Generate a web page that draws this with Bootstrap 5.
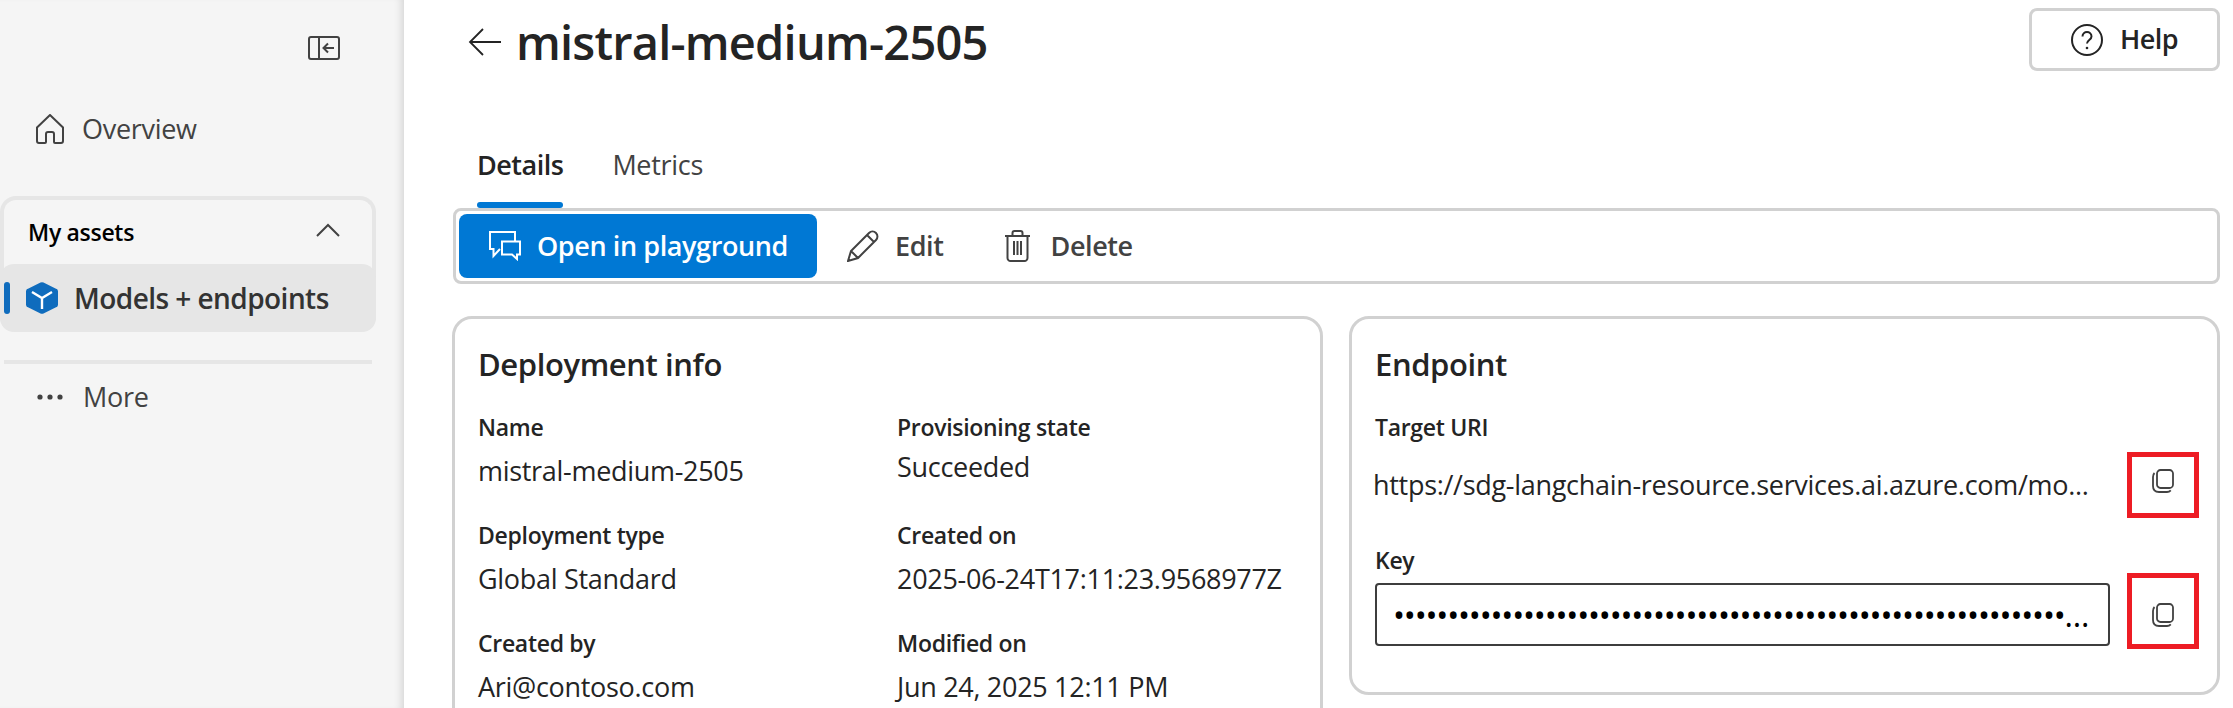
<!DOCTYPE html>
<html lang="en">
<head>
    <meta charset="UTF-8">
    <title>mistral-medium-2505</title>
    <link href="https://cdn.jsdelivr.net/npm/bootstrap@5.3.3/dist/css/bootstrap.min.css" rel="stylesheet">
    <style>
        html, body { height: 708px; overflow: hidden; }
        body { font-family: "Open Sans", "Noto Sans", sans-serif; color: #242424; font-size: 27px; background: #fff; letter-spacing: -.3px; }
        svg { display: block; flex: none; }

        .side-bar { width: 404px; height: 708px; background: #f5f5f5; box-shadow: inset -8px 0 8px -6px rgba(0,0,0,.14); flex: none; padding-top: 36px; }
        .collapse-wrap { padding-left: 308px; height: 24px; }
        .side-link { height: 40px; gap: 18px; color: #424242; }
        .overview-link { margin-top: 49px; padding-left: 36px; }
        .assets-group { margin-top: 47px; width: 376px; height: 136px; border: 4px solid #e6e6e6; border-bottom: 0; border-radius: 16px; }
        .assets-head { height: 64px; padding: 0 32px 0 24px; font-size: 23px; font-weight: 600; color: #000; }
        .assets-row { height: 68px; margin: 0 -4px; background: #e6e6e6; border-radius: 14px; gap: 16px; padding-left: 4px; font-size: 28px; font-weight: 600; color: #333; letter-spacing: -.55px; }
        .active-pill { width: 6px; height: 32px; background: #0f6cbd; border-radius: 3px; }
        .side-rule { height: 4px; background: #e6e6e6; width: 368px; margin: 28px 0 0 4px; }
        .more-link { margin-top: 13px; padding-left: 37px; gap: 20px; }

        .main-area { padding: 0 13px 0 48px; min-width: 0; }
        .head-row { height: 88px; }
        .page-title { font-size: 47px; font-weight: 600; margin: 0; letter-spacing: -.8px; line-height: 84px; }
        .back-link { margin: 0 15px 0 16px; }
        .help-btn { margin-top: 8px; width: 191px; height: 63px; border: 3px solid #d1d1d1; border-radius: 8px; gap: 17px; font-size: 27px; font-weight: 600; letter-spacing: -.5px; color: #242424; background: #fff; padding: 0; }

        .tab-row { margin-top: 46px; padding-left: 25px; gap: 49px; }
        .tab-item { height: 74px; padding-top: 13px; color: #424242; position: relative; line-height: 36px; }
        .tab-item.is-on { font-weight: 600; color: #242424; letter-spacing: -.5px; }
        .tab-item.is-on::after { content: ""; position: absolute; left: 0; right: 0; bottom: 0; height: 6px; background: #0078d4; border-radius: 3px; }

        .tool-bar { height: 76px; border: 3px solid #d1d1d1; border-radius: 8px; padding: 3px; margin-left: 1px; }
        .tool-primary { width: 358px; height: 64px; border-radius: 8px; background: #0078d4; border: 0; color: #fff; font-size: 27px; font-weight: 600; letter-spacing: -.4px; gap: 15px; padding: 0 0 0 29px; }
        .tool-btn { font-size: 27px; font-weight: 600; letter-spacing: -.4px; color: #424242; gap: 16px; margin-left: 30px; }
        .tool-btn.is-delete { gap: 20px; margin-left: 60px; }

        .card-row { margin-top: 32px; --bs-gutter-x: 26px; margin-left: -13px; margin-right: -13px; }
        .info-box { border: 3px solid #d1d1d1; border-radius: 20px; padding: 0 23px; }
        .info-title { font-size: 31px; font-weight: 600; line-height: 40px; margin: 0; padding-top: 25px; letter-spacing: -.4px; }
        .info-grid { grid-template-columns: 419px 1fr; margin-top: 28px; padding-bottom: 40px; }
        .info-cell { height: 108px; }
        .field-label { font-size: 23px; font-weight: 600; line-height: 30px; letter-spacing: -.3px; }
        .field-value { line-height: 36px; margin-top: 11px; }
        .field-value.is-tight { margin-top: 7px; }

        .endpoint-box { height: 379px; padding-right: 18px; }
        .uri-row { height: 66px; margin-top: 10px; }
        .uri-text { width: 718px; margin-left: -2px; white-space: nowrap; }
        .copy-box { width: 72px; flex: none; border: 5px solid #ed1c24; margin-left: 36px; padding-top: 12px; }
        .key-label { margin-top: 27px; }
        .key-row { height: 76px; margin-top: -2px; }
        .key-input { width: 735px; flex: none; height: 63px; margin-top: 10px; border: 2px solid #3d3d3d; border-radius: 4px; padding: 0 16px; font-size: 32px; color: #000; text-overflow: ellipsis; letter-spacing: -1.2px; box-shadow: none; }
        .key-input:focus { border-color: #3d3d3d; box-shadow: none; }
        .key-copy { margin-left: 17px; padding-top: 25px; }
    </style>
</head>
<body>
<div class="d-flex">
    <!-- left menu -->
    <aside class="side-bar">
        <div class="collapse-wrap">
            <svg width="32" height="24" viewBox="0 0 32 24" fill="none" stroke="#424242" stroke-width="2"><rect x="1" y="1" width="30" height="22" rx="2"/><path d="M11 1v22M26 12H16M20 7.500 15.500 12l4.500 4.500"/></svg>
        </div>
        <div class="side-link overview-link d-flex align-items-center">
            <svg width="28" height="30" viewBox="0 0 28 30" fill="none" stroke="#424242" stroke-width="2"><path d="M1 13.500 14 1l13 12.500V27a2 2 0 0 1-2 2h-6a1 1 0 0 1-1-1v-8a2 2 0 0 0-2-2h-4a2 2 0 0 0-2 2v8a1 1 0 0 1-1 1H3a2 2 0 0 1-2-2z"/></svg>
            <span>Overview</span>
        </div>
        <div class="assets-group">
            <div class="assets-head d-flex align-items-center justify-content-between">
                <span>My assets</span>
                <svg class="mb-1" width="24" height="14" viewBox="0 0 24 14" fill="none" stroke="#424242" stroke-width="2"><path d="M1 13 12 2l11 11"/></svg>
            </div>
            <div class="assets-row d-flex align-items-center">
                <span class="active-pill"></span>
                <svg width="32" height="32" viewBox="0 0 32 32"><path fill="#0f6cbd" d="M14.500.6a3 3 0 0 1 3 0l12 5.800A3 3 0 0 1 32 9v14a3 3 0 0 1-2.500 2.600l-12 5.800a3 3 0 0 1-3 0l-12-5.800A3 3 0 0 1 0 23V9a3 3 0 0 1 2.500-2.600z"/><path fill="none" stroke="#fff" stroke-width="2.400" d="M6 10l10 6 10-6M16 16v11"/></svg>
                <span>Models + endpoints</span>
            </div>
        </div>
        <div class="side-rule"></div>
        <div class="side-link more-link d-flex align-items-center">
            <svg width="26" height="6" viewBox="0 0 26 6" fill="#424242"><circle cx="3" cy="3" r="2.600"/><circle cx="13" cy="3" r="2.600"/><circle cx="23" cy="3" r="2.600"/></svg>
            <span>More</span>
        </div>
    </aside>

    <!-- page content -->
    <main class="main-area flex-grow-1">
        <div class="head-row d-flex justify-content-between align-items-start">
            <div class="d-flex align-items-center">
                <svg class="back-link" width="33" height="28" viewBox="0 0 33 28" fill="none" stroke="#242424" stroke-width="1.800"><path d="M33 14H2M15 1 2 14l13 13"/></svg>
                <h1 class="page-title">mistral-medium-2505</h1>
            </div>
            <button type="button" class="help-btn d-flex align-items-center justify-content-center">
                <svg width="32" height="32" viewBox="0 0 32 32" fill="none" stroke="#242424" stroke-width="2"><circle cx="16" cy="16" r="15"/><path d="M11.500 12.500c0-6 9-6 9 0 0 3.500-4.500 3.500-4.500 7"/><circle cx="16" cy="24" r="1.300" fill="#242424" stroke="none"/></svg>
                <span>Help</span>
            </button>
        </div>

        <div class="tab-row d-flex">
            <div class="tab-item is-on">Details</div>
            <div class="tab-item">Metrics</div>
        </div>

        <div class="tool-bar d-flex align-items-center">
            <button type="button" class="tool-primary d-flex align-items-center">
                <svg width="34" height="30" viewBox="0 0 34 30" fill="none" stroke="#fff" stroke-width="2"><path d="M27 10V1H2v17h3.500v7l6.500-7"/><path d="M14 10.500h18v13h-3v4.500l-5-4.500H14z"/></svg>
                <span>Open in playground</span>
            </button>
            <div class="tool-btn d-flex align-items-center">
                <svg width="32" height="32" viewBox="0 0 32 32" fill="none" stroke="#424242" stroke-width="2"><path d="M1 31l3-10L22 3a4.500 4.500 0 0 1 7 7L11 28zM4 21l7 7M20 5l7 7"/></svg>
                <span>Edit</span>
            </div>
            <div class="tool-btn is-delete d-flex align-items-center">
                <svg width="27" height="32" viewBox="0 0 27 32" fill="none" stroke="#424242" stroke-width="2"><path d="M1 6h25M8.500 6V3a2 2 0 0 1 2-2h6a2 2 0 0 1 2 2v3M3.500 6v22a3 3 0 0 0 3 3h14a3 3 0 0 0 3-3V6M10 11v14M13.500 11v14M17 11v14"/></svg>
                <span>Delete</span>
            </div>
        </div>

        <div class="row card-row align-items-start">
            <div class="col-6">
                <div class="info-box">
                    <h2 class="info-title">Deployment info</h2>
                    <div class="info-grid d-grid">
                        <div class="info-cell"><div class="field-label">Name</div><div class="field-value">mistral-medium-2505</div></div>
                        <div class="info-cell"><div class="field-label">Provisioning state</div><div class="field-value is-tight">Succeeded</div></div>
                        <div class="info-cell"><div class="field-label">Deployment type</div><div class="field-value">Global Standard</div></div>
                        <div class="info-cell"><div class="field-label">Created on</div><div class="field-value">2025-06-24T17:11:23.9568977Z</div></div>
                        <div class="info-cell"><div class="field-label">Created by</div><div class="field-value">Ari@contoso.com</div></div>
                        <div class="info-cell"><div class="field-label">Modified on</div><div class="field-value">Jun 24, 2025 12:11 PM</div></div>
                    </div>
                </div>
            </div>
            <div class="col-6">
                <div class="info-box endpoint-box">
                    <h2 class="info-title">Endpoint</h2>
                    <div class="field-label" style="margin-top:28px">Target URI</div>
                    <div class="uri-row d-flex">
                        <div class="uri-text align-self-center">https://sdg-langchain-resource.services.ai.azure.com/mo...</div>
                        <div class="copy-box d-flex justify-content-center align-items-start">
                            <svg width="22" height="24" viewBox="0 0 22 24" fill="none" stroke="#424242" stroke-width="1.800"><rect x="5" y="1" width="16" height="18" rx="3.500"/><path d="M2.500 4C1.500 5 1 6 1 8v9c0 3.500 2 6 6 6h8c2 0 3-.8 3.800-1.600"/></svg>
                        </div>
                    </div>
                    <div class="field-label key-label">Key</div>
                    <div class="key-row d-flex">
                        <input class="form-control key-input" type="text" readonly value="••••••••••••••••••••••••••••••••••••••••••••••••••••••••••••••••••••••••••••••••••••••••">
                        <div class="copy-box key-copy d-flex justify-content-center align-items-start">
                            <svg width="22" height="24" viewBox="0 0 22 24" fill="none" stroke="#424242" stroke-width="1.800"><rect x="5" y="1" width="16" height="18" rx="3.500"/><path d="M2.500 4C1.500 5 1 6 1 8v9c0 3.500 2 6 6 6h8c2 0 3-.8 3.800-1.600"/></svg>
                        </div>
                    </div>
                </div>
            </div>
        </div>
    </main>
</div>
<script src="https://cdn.jsdelivr.net/npm/bootstrap@5.3.3/dist/js/bootstrap.bundle.min.js"></script>
</body>
</html>
